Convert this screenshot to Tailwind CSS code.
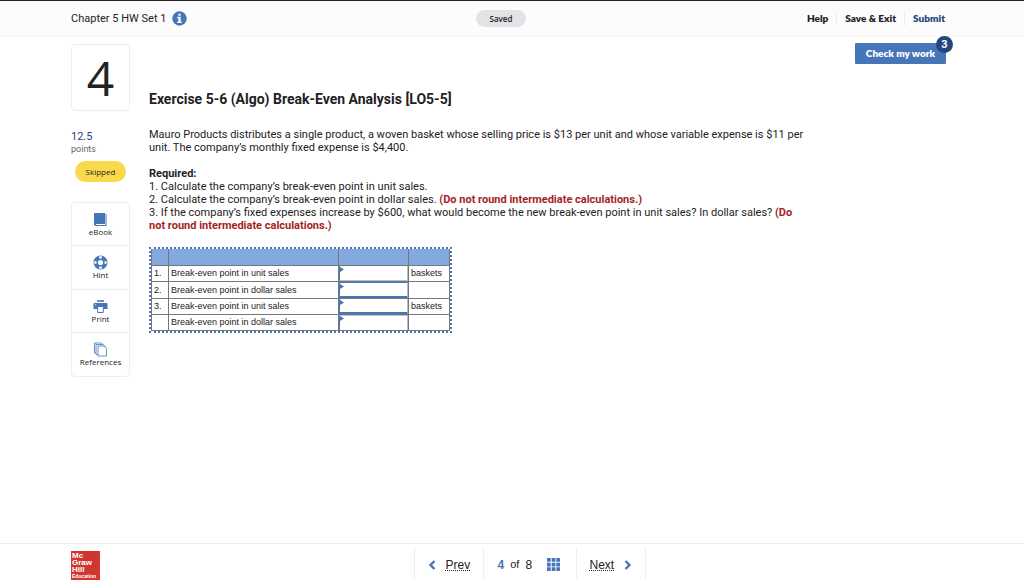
<!DOCTYPE html>
<html lang="en">
<head>
<meta charset="utf-8">
<meta name="viewport" content="width=device-width, initial-scale=1">
<title>Chapter 5 HW Set 1</title>
<script src="https://cdn.jsdelivr.net/npm/@tailwindcss/browser@4"></script>
</head>
<body class="flex min-h-screen flex-col bg-white font-['Roboto',sans-serif] text-[11px] text-[#222]">
<header class="grid h-[37px] grid-cols-[1fr_auto_1fr] items-center border-t border-b border-t-[#222] border-b-[#f5f5f5] bg-[#fcfcfc] pr-[79px] pl-[71px]">
  <div class="flex items-center gap-[6px]">
    <h1 class="pt-0.5">Chapter 5 HW Set 1</h1>
    <button type="button" aria-label="Assignment information">
      <svg class="size-[15px]" viewBox="0 0 15 15"><circle cx="7.500" cy="7.500" r="7.200" fill="#4675b8"/><path d="M6.400 2.700h2.200v2h-2.200zM5.300 5.800h3.300v4.600h1.100v1.500H5.200v-1.500h1.200V7.200H5.300z" fill="#fff"/></svg>
    </button>
  </div>
  <span class="mr-[14px] flex h-[17px] w-[50px] items-center justify-center rounded-full bg-[#e4e2e6] font-['Open_Sans',sans-serif] text-[8px] font-semibold">Saved</span>
  <nav class="flex items-center justify-end font-['Lato',sans-serif] text-[10px] font-extrabold" aria-label="Assignment">
    <a href="#" class="pr-2">Help</a>
    <a href="#" class="border-x border-[#eee] px-2">Save &amp; Exit</a>
    <a href="#" class="pl-2 text-[#23467f]">Submit</a>
  </nav>
</header>

<main class="flex grow items-start pr-[78px] pl-[71px] pt-[6px]">
  <aside class="w-[59px] shrink-0 pt-px">
    <div class="flex h-[67px] items-center justify-center rounded border border-[#eee] font-['Open_Sans',sans-serif] text-5xl">4</div>
    <p class="pt-5 leading-3 text-[#23467f]">12.5</p>
    <p class="text-[9px] leading-3 text-[#666]">points</p>
    <p class="mx-auto mt-[6px] flex h-[21px] w-[51px] items-center justify-center rounded-full bg-[#fada4a] font-['Open_Sans',sans-serif] text-[8px]">Skipped</p>
    <nav class="mt-5 divide-y divide-[#eee] rounded border border-[#eee] font-['Open_Sans',sans-serif] text-[8px] leading-[10px]" aria-label="Resources">
      <a href="#" class="flex h-[43px] flex-col items-center justify-center">
        <svg class="size-[15px]" viewBox="0 0 15 15"><path d="M2 1h10v11H3v1h9.500V2h1v12H3Q1 14 1 12V2q0-1 1-1z" fill="#4675b8"/></svg>
        eBook</a>
      <a href="#" class="flex h-[44px] flex-col items-center justify-center">
        <svg class="size-[15px]" viewBox="0 0 15 15"><circle cx="7.500" cy="7.500" r="4.800" fill="none" stroke="#4675b8" stroke-width="4.400"/><path d="M6.200 1.300h2.600v2.200H6.200zM6.200 11.500h2.600v2.200H6.200zM1.300 6.200h2.200v2.600H1.300zM11.500 6.200h2.200v2.600h-2.200z" fill="#fff"/></svg>
        Hint</a>
      <a href="#" class="flex h-[43px] flex-col items-center justify-center">
        <svg class="size-[15px]" viewBox="0 0 15 15"><path d="M4 1.200h7v1.600H4z" fill="#4675b8"/><path fill-rule="evenodd" d="M1.500 4h12q1 0 1 1v5H.5V5q0-1 1-1zm.7 1.200v1h1v-1z" fill="#4675b8"/><path d="M4.700 7.500h5.600v6H4.700z" fill="#fff" stroke="#4675b8"/></svg>
        Print</a>
      <a href="#" class="flex h-[43px] flex-col items-center justify-center">
        <svg class="size-[15px]" viewBox="0 0 15 15" fill="#fff" stroke="#4675b8" stroke-width=".8"><path d="M1.500 1h7l2 2v8h-9z"/><path d="M3 2.500h7l2 2v8H3z"/><path d="M5 4h6l2.500 2.500v7.500H5z"/></svg>
        References</a>
    </nav>
  </aside>

  <section class="ml-[19px] min-w-0 max-w-[690px] grow pt-[48px]">
    <h2 class="text-sm leading-4 font-bold">Exercise 5-6 (Algo) Break-Even Analysis [LO5-5]</h2>
    <p class="mt-[21px] leading-[13px]">Mauro Products distributes a single product, a woven basket whose selling price is $13 per unit and whose variable expense is $11 per<br>unit. The company’s monthly fixed expense is $4,400.</p>
    <div class="mt-[13px] leading-[13px]">
      <h3 class="font-bold">Required:</h3>
      <p>1. Calculate the company’s break-even point in unit sales.</p>
      <p>2. Calculate the company’s break-even point in dollar sales. <strong class="font-bold text-[#a31f1f]">(Do not round intermediate calculations.)</strong></p>
      <p>3. If the company’s fixed expenses increase by $600, what would become the new break-even point in unit sales? In dollar sales? <strong class="font-bold text-[#a31f1f]">(Do<br>not round intermediate calculations.)</strong></p>
    </div>
    <div class="mt-[15px] w-fit border-2 border-dotted border-[#4675b8]">
      <table class="table-fixed border-collapse font-['Liberation_Sans',sans-serif] text-[9px] leading-3 [&_td]:border [&_td]:border-[#777] [&_td]:p-0 [&_td]:pl-[2px] [&_th]:border-x [&_th]:border-[#777] [&_input]:block [&_input]:h-[15px] [&_input]:w-full [&_input]:border [&_input]:border-[#a9c0e2] [&_input]:border-l-[#4675b8] [&_input]:outline-none">
        <colgroup><col class="w-[17px]"><col class="w-[170px]"><col class="w-[70px]"><col class="w-[41px]"></colgroup>
        <thead><tr class="h-4 bg-[#82aadf]"><th></th><th></th><th></th><th></th></tr></thead>
        <tbody>
          <tr class="h-4"><td>1.</td><td><label for="u1">Break-even point in unit sales</label></td><td class="relative !pl-0"><input id="u1" class="border-t-0!"><svg class="absolute top-px left-px h-[5px] w-1" viewBox="0 0 4 5"><path d="M0 0l4 2.500-4 2.500z" fill="#4675b8"/></svg></td><td>baskets</td></tr>
          <tr class="h-[17px]"><td>2.</td><td><label for="d1">Break-even point in dollar sales</label></td><td class="relative !pl-0"><input id="d1" class="h-4! border-b-2! border-y-[#4675b8]!"><svg class="absolute top-0.5 left-px h-[5px] w-1" viewBox="0 0 4 5"><path d="M0 0l4 2.500-4 2.500z" fill="#4675b8"/></svg></td><td></td></tr>
          <tr class="h-4"><td>3.</td><td><label for="u2">Break-even point in unit sales</label></td><td class="relative !pl-0"><input id="u2" class="border-t-0! border-b-2! border-b-[#4675b8]!"><svg class="absolute top-px left-px h-[5px] w-1" viewBox="0 0 4 5"><path d="M0 0l4 2.500-4 2.500z" fill="#4675b8"/></svg></td><td>baskets</td></tr>
          <tr class="h-4"><td></td><td><label for="d2">Break-even point in dollar sales</label></td><td class="relative !pl-0"><input id="d2" class="border-b-0!"><svg class="absolute top-px left-px h-[5px] w-1" viewBox="0 0 4 5"><path d="M0 0l4 2.500-4 2.500z" fill="#4675b8"/></svg></td><td></td></tr>
        </tbody>
      </table>
    </div>
  </section>

  <div class="relative ml-auto shrink-0">
    <button type="button" class="h-[21px] w-[91px] rounded-[1px] bg-[#4675b8] font-['Lato',sans-serif] text-[10px] font-extrabold text-white">Check my work</button>
    <span class="absolute -top-[7px] -right-[7px] flex size-[17px] items-center justify-center rounded-full bg-[#23467f] pt-px font-bold text-white">3</span>
  </div>
</main>

<footer class="grid h-[42px] grid-cols-[1fr_auto_1fr] items-start border-t border-[#eee] pr-[36px] pl-[71px]">
  <a href="#" class="mt-[7px] flex size-[29px] flex-col justify-center bg-[#d03530] pl-px font-['Liberation_Sans',sans-serif] text-[8px] leading-[7px] font-bold text-white"><span>Mc</span><span>Graw</span><span>Hill</span><span class="text-[5px] leading-[6px]">Education</span></a>
  <nav class="mt-[3px] flex h-8 divide-x divide-[#eee] border-x border-[#eee] font-['Liberation_Sans',sans-serif] text-xs" aria-label="Questions">
    <a href="#" class="flex w-[69px] items-center gap-[10px] pt-[3px] pl-[13px]"><svg class="h-[10px] w-2" viewBox="0 0 8 10"><path d="M6.500 1L2.500 5l4 4" fill="none" stroke="#4675b8" stroke-width="2.400"/></svg><span class="underline decoration-dotted underline-offset-1">Prev</span></a>
    <div class="flex w-[93px] items-center gap-[6px] pt-[3px] pl-[14px]"><b class="text-[#4675b8]">4</b><span class="text-[11px]">of</span><span>8</span>
      <button type="button" class="ml-[9px]" aria-label="Question list"><svg class="size-[13px]" viewBox="0 0 13 13" fill="#4675b8"><path d="M0 0h3.700v3.700H0zM4.700 0h3.700v3.700H4.700zM9.300 0H13v3.700H9.300zM0 4.700h3.700v3.700H0zM4.700 4.700h3.700v3.700H4.700zM9.300 4.700H13v3.700H9.300zM0 9.300h3.700V13H0zM4.700 9.300h3.700V13H4.700zM9.300 9.300H13V13H9.300z"/></svg></button>
    </div>
    <a href="#" class="flex w-[68px] items-center gap-[10px] pt-[3px] pl-[13px]"><span class="underline decoration-dotted underline-offset-1">Next</span><svg class="h-[10px] w-2" viewBox="0 0 8 10"><path d="M1.500 1l4 4-4 4" fill="none" stroke="#4675b8" stroke-width="2.400"/></svg></a>
  </nav>
</footer>
</body>
</html>
